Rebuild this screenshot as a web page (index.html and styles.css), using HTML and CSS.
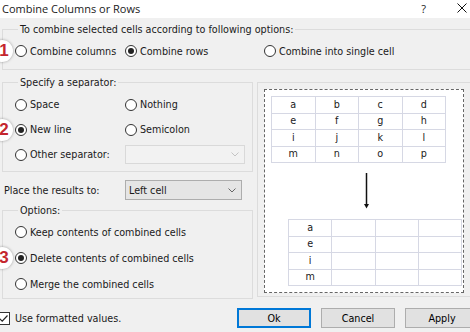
FILE: index.html
```html
<!DOCTYPE html>
<html lang="en">
<head>
<meta charset="UTF-8">
<meta name="viewport" content="width=device-width, initial-scale=1.0">
<title>Combine Columns or Rows</title>
<link rel="stylesheet" href="styles.css">
</head>
<body>
    <!-- Barre de titre -->
    <div class="titlebar">
        <span class="title">Combine Columns or Rows</span>
        <div class="title-controls">
            <span class="help">?</span>
            <svg class="close" width="10" height="10" viewBox="0 0 10 10"><path d="M0.5 0.5 L9.5 9.5 M9.5 0.5 L0.5 9.5" stroke="#111" stroke-width="1" fill="none"/></svg>
        </div>
    </div>

    <!-- Mode de combinaison -->
    <fieldset class="group group-mode">
        <legend>To combine selected cells according to following options:</legend>
        <div class="mode-row">
            <span class="badge">1</span>
            <label class="radio"><span class="circle"></span>Combine columns</label>
            <label class="radio"><span class="circle checked"></span>Combine rows</label>
            <label class="radio"><span class="circle"></span>Combine into single cell</label>
        </div>
    </fieldset>

    <div class="main">
        <div class="left">
            <fieldset class="group group-sep">
                <legend>Specify a separator:</legend>
                <div class="sep-grid">
                    <label class="radio"><span class="circle"></span>Space</label>
                    <label class="radio"><span class="circle"></span>Nothing</label>
                    <label class="radio badge-row"><span class="badge">2</span><span class="circle checked"></span>New line</label>
                    <label class="radio"><span class="circle"></span>Semicolon</label>
                    <label class="radio"><span class="circle"></span>Other separator:</label>
                    <div class="combo combo-disabled">
                        <span></span>
                        <svg class="chevron" width="8" height="5" viewBox="0 0 8 5"><path d="M0.5 0.5 L4 4 L7.5 0.5" stroke="#c4c4c4" fill="none"/></svg>
                    </div>
                </div>
            </fieldset>

            <div class="place-row">
                <span>Place the results to:</span>
                <div class="combo combo-place">
                    <span>Left cell</span>
                    <svg class="chevron" width="8" height="5" viewBox="0 0 8 5"><path d="M0.5 0.5 L4 4 L7.5 0.5" stroke="#666" fill="none"/></svg>
                </div>
            </div>

            <fieldset class="group group-opts">
                <legend>Options:</legend>
                <label class="radio opt-row"><span class="circle"></span>Keep contents of combined cells</label>
                <label class="radio opt-row badge-row"><span class="badge">3</span><span class="circle checked"></span>Delete contents of combined cells</label>
                <label class="radio opt-row"><span class="circle"></span>Merge the combined cells</label>
            </fieldset>
        </div>

        <!-- Aperçu -->
        <div class="preview">
            <div class="preview-inner">
                <table class="grid grid-src">
                    <tr><td>a</td><td>b</td><td>c</td><td>d</td></tr>
                    <tr><td>e</td><td>f</td><td>g</td><td>h</td></tr>
                    <tr><td>i</td><td>j</td><td>k</td><td>l</td></tr>
                    <tr><td>m</td><td>n</td><td>o</td><td>p</td></tr>
                </table>
                <svg class="arrow" width="9" height="36" viewBox="0 0 9 36">
                    <path d="M4.5 0 L4.5 33" stroke="#111" stroke-width="1.5"/>
                    <path d="M2 31 L4.5 35.5 L7 31 Z" fill="#111"/>
                </svg>
                <table class="grid grid-dst">
                    <tr><td>a</td><td></td><td></td><td></td></tr>
                    <tr><td>e</td><td></td><td></td><td></td></tr>
                    <tr><td>i</td><td></td><td></td><td></td></tr>
                    <tr><td>m</td><td></td><td></td><td></td></tr>
                </table>
            </div>
        </div>
    </div>

    <!-- Bas de la boîte -->
    <div class="footer">
        <label class="check">
            <span class="box"><svg width="11" height="11" viewBox="0 0 11 11"><path d="M1.5 5.5 L4.2 8.2 L9.5 2.5" stroke="#222" stroke-width="1.2" fill="none"/></svg></span>
            Use formatted values.
        </label>
        <div class="buttons">
            <button class="btn btn-default">Ok</button>
            <button class="btn">Cancel</button>
            <button class="btn">Apply</button>
        </div>
    </div>
</body>
</html>
```

FILE: styles.css
```css
/* Styles généraux */
* {
    box-sizing: border-box;
}
body {
    margin: 0;
    width: 470px;
    height: 332px;
    overflow: hidden;
    background: #f0f0f0;
    font-family: "DejaVu Sans Condensed", "DejaVu Sans", sans-serif;
    font-stretch: condensed;
    font-size: 10.7px;
    color: #1a1a1a;
}

/* Barre de titre */
.titlebar {
    height: 18px;
    background: #fff;
    display: flex;
    align-items: center;
    justify-content: space-between;
    padding: 0 3px 2px 2px;
    font-family: "Open Sans", sans-serif;
    font-stretch: normal;
    font-size: 11px;
}
.title-controls {
    display: flex;
    align-items: center;
    gap: 31px;
}
.help {
    font-size: 11px;
}

/* Cadres (group box) */
.group {
    border: 1px solid #dcdcdc;
    margin: 0;
    padding: 0;
    min-width: 0;
}
.group legend {
    padding: 0 2px;
    margin-left: 3px;
    line-height: 13px;
}
.group-mode {
    margin: 5px -12px 0 2px;
    padding: 6px 0 9px 12px;
}
.mode-row {
    position: relative;
    height: 18px;
    display: grid;
    grid-template-columns: 110px 139px auto;
    align-items: center;
}

/* Boutons radio */
.radio {
    display: flex;
    align-items: center;
    gap: 3px;
    white-space: nowrap;
}
.circle {
    width: 12px;
    height: 12px;
    border: 1px solid #333;
    border-radius: 50%;
    background: #fff;
    display: flex;
    align-items: center;
    justify-content: center;
    flex-shrink: 0;
}
.circle.checked::after {
    content: "";
    width: 6px;
    height: 6px;
    border-radius: 50%;
    background: #222;
}

/* Pastilles numérotées */
.badge {
    position: absolute;
    left: -24px;
    top: 50%;
    margin-top: -11px;
    width: 22px;
    height: 22px;
    padding-left: 4px;
    border-radius: 50%;
    background: #fff;
    box-shadow: 0 0 3px rgba(0, 0, 0, 0.35);
    color: #c4262e;
    font-family: "Liberation Sans", sans-serif;
    font-stretch: normal;
    font-weight: bold;
    font-size: 17px;
    line-height: 22px;
    text-align: center;
}
.badge-row {
    position: relative;
}

.main {
    display: flex;
    align-items: flex-start;
}
.left {
    width: 251px;
    margin-left: 2px;
    flex-shrink: 0;
}

/* Séparateur */
.group-sep {
    margin-top: 6px;
    padding: 3px 0 4px 12px;
}
.sep-grid {
    display: grid;
    grid-template-columns: 110px 120px;
    grid-auto-rows: 25px;
    align-items: center;
}

/* Listes déroulantes */
.combo {
    display: flex;
    align-items: center;
    justify-content: space-between;
    padding: 0 5px 0 3px;
}
.combo-disabled {
    height: 19px;
    width: 120px;
    border: 1px solid #d9d9d9;
    background: #f2f2f2;
}
.combo-place {
    height: 20px;
    width: 117px;
    border: 1px solid #adadad;
    background: #e5e5e5;
}

.place-row {
    margin-top: 8px;
    padding-left: 2px;
    display: grid;
    grid-template-columns: 121px auto;
    align-items: center;
}

/* Options */
.group-opts {
    margin-top: 4px;
    padding: 2px 0 1px 12px;
}
.opt-row {
    height: 26px;
}

/* Aperçu */
.preview {
    flex: 1;
    margin: 12px -20px 0 4px;
    border: 1px solid #dcdcdc;
    padding: 6px 6px 3px 6px;
}
.preview-inner {
    width: 200px;
    height: 204px;
    border: 1px dashed #666;
    background: #fff;
    padding: 6px 0 0 6px;
}
.grid {
    border-collapse: collapse;
    table-layout: fixed;
    text-align: center;
}
.grid td {
    border: 1px solid #d6d8e4;
    height: 16.5px;
    padding: 0;
    line-height: 14px;
}
.grid-src {
    width: 175px;
}
.grid-dst {
    width: 174px;
    margin: 10px 0 0 17px;
}
.arrow {
    display: block;
    margin: 10px 0 0 91px;
}

/* Bas */
.footer {
    display: flex;
    align-items: center;
    margin: 9px -9px 0 0;
}
.check {
    display: flex;
    align-items: center;
    gap: 5px;
    margin-left: -3px;
}
.box {
    width: 13px;
    height: 13px;
    border: 1px solid #333;
    background: #fff;
    display: flex;
    align-items: center;
    justify-content: center;
}
.buttons {
    margin-left: auto;
    display: flex;
    gap: 10px;
}
.btn {
    width: 74px;
    height: 20px;
    border: 1px solid #adadad;
    background: #e1e1e1;
    font: inherit;
    color: #000;
    padding: 0;
}
.btn-default {
    border: 2px solid #0078d7;
}
```
